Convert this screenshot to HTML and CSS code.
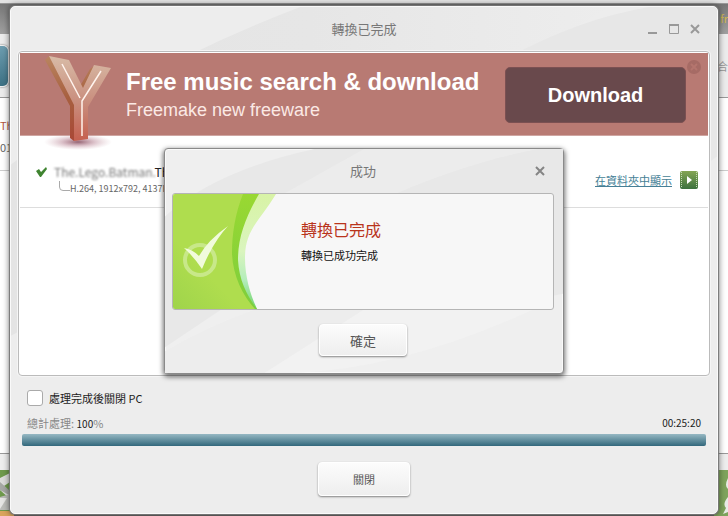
FILE: index.html
```html
<!DOCTYPE html>
<html lang="zh-Hant">

<head>
    <meta charset="UTF-8">
    <meta name="viewport" content="width=device-width, initial-scale=1.0">
    <title>轉換已完成</title>
    <link rel="stylesheet" href="styles.css">
</head>

<body>
    <!-- main program behind the window -->
    <div class="app">
        <div class="app-edge"></div>
        <div class="app-menu"><span>fr</span></div>
        <div class="app-toolbar">
            <div class="app-tab"></div>
            <span>合</span>
        </div>
        <div class="app-file">
            <p class="app-file-name">Th</p>
            <p>01:</p>
        </div>
        <div class="app-list"></div>
        <div class="app-status"></div>
        <div class="app-icons">
            <svg width="14" height="46" viewBox="0 0 14 46">
                <rect width="14" height="46" fill="#6f9a4c"/>
                <path d="M0 8 L10 3 V12 L4 16 L10 22 V29 L0 20Z" fill="#dcdcda"/>
                <path d="M0 12 L9 20 V25 L0 20Z" fill="#a6a8a4"/>
                <path d="M0 27 L10 24 V40 H0Z" fill="#bcbdb9"/>
                <path d="M0 28 H7 L0 39Z" fill="#e6e6e4"/>
                <path d="M0 41 H14 V46 H0Z" fill="#d9a45c"/>
            </svg>
            <svg width="14" height="46" viewBox="0 0 14 46">
                <rect width="14" height="46" fill="#7fa45c"/>
                <path d="M14 8 Q10 16 14 19Z M14 27 Q8 34 12 38 L9 44 L14 42Z" fill="#e9ece6"/>
            </svg>
        </div>
    </div>

    <main class="window">
        <svg class="sheen" viewBox="0 0 708 508" preserveAspectRatio="none">
            <defs>
                <linearGradient id="fade" x1="0" y1="0" x2="1" y2="0">
                    <stop offset="0" stop-color="#e4e4e4"/>
                    <stop offset=".5" stop-color="#e6e6e6"/>
                    <stop offset="1" stop-color="#ededed"/>
                </linearGradient>
            </defs>
            <path d="M0 158 Q120 65 290 0 H600 L500 60 L0 330Z" fill="url(#fade)"/>
            <path d="M500 50 Q570 12 640 0 H708 V150 L500 300Z" fill="#e7e7e7"/>
        </svg>
        <header class="title-bar">
            <h1>轉換已完成</h1>
            <div class="window-buttons">
                <button aria-label="最小化"><svg width="10" height="12" viewBox="0 0 10 12"><path d="M0 10H9" stroke="#999" stroke-width="2"/></svg></button>
                <button aria-label="最大化"><svg width="10" height="12" viewBox="0 0 10 12"><path d="M.5 2V10.500H9.500V2" fill="none" stroke="#999"/><path d="M0 2H10" stroke="#999" stroke-width="2"/></svg></button>
                <button aria-label="關閉視窗"><svg width="10" height="12" viewBox="0 0 10 12"><path d="M1 2L9 10M9 2L1 10" stroke="#999" stroke-width="2"/></svg></button>
            </div>
        </header>

        <section class="panel">
            <div class="banner">
                <svg class="banner-logo" width="76" height="98" viewBox="0 0 76 98">
                    <defs>
                        <linearGradient id="face" x1="0" y1="0" x2="0" y2="1">
                            <stop offset="0" stop-color="#d8bba6"/>
                            <stop offset=".55" stop-color="#c98d7d"/>
                            <stop offset="1" stop-color="#c5604f"/>
                        </linearGradient>
                        <linearGradient id="side" x1="0" y1="0" x2="0" y2="1">
                            <stop offset="0" stop-color="#b98560"/>
                            <stop offset=".5" stop-color="#a75f3f"/>
                            <stop offset="1" stop-color="#a94836"/>
                        </linearGradient>
                        <radialGradient id="glow">
                            <stop offset="0" stop-color="#713044" stop-opacity=".75"/>
                            <stop offset=".5" stop-color="#a05a70" stop-opacity=".35"/>
                            <stop offset="1" stop-color="#c08c98" stop-opacity="0"/>
                        </radialGradient>
                    </defs>
                    <ellipse cx="38" cy="89" rx="34" ry="8" fill="url(#glow)"/>
                    <path d="M5 7L9 3L33 45L50 16L54 13L44 52L34 88L30 85V53Z" fill="url(#side)"/>
                    <path d="M9 3L29 7L43 35L54 12L71 15L48 54V86L34 88V52Z" fill="url(#face)"/>
                    <path d="M22 11L40 45M61 18L42 48V83" fill="none" stroke="#fff3ed" stroke-width="1.500"/>
                </svg>
                <div class="banner-text">
                    <h2>Free music search &amp; download</h2>
                    <p>Freemake new freeware</p>
                </div>
                <button class="download">Download</button>
                <button class="banner-close" aria-label="關閉廣告"><svg width="14" height="14" viewBox="0 0 14 14"><circle cx="7" cy="7" r="7" fill="#a66b65"/><path d="M4 4L10 10M10 4L4 10" stroke="#b4756e" stroke-width="2"/></svg></button>
            </div>

            <div class="file-row">
                <svg class="file-check" width="12" height="10" viewBox="0 0 12 10"><path d="M0 4L3 2L5 5L10 0L11 2L5 10H4Z" fill="#3f8430"/></svg>
                <div class="file-info">
                    <p class="file-name"><span>The.Lego.Batman.</span>The</p>
                    <p class="file-meta"><svg width="12" height="12" viewBox="0 0 12 12"><path d="M1.500 0V6Q1.500 9.500 5 9.500H12" fill="none" stroke="#aaa"/></svg>H.264, 1912x792, 4137Kbps</p>
                </div>
                <a href="#">在資料夾中顯示</a>
                <button class="play" aria-label="播放"><svg width="18" height="18" viewBox="0 0 18 18"><path d="M1.500 1V17M16.500 1V17" stroke="#c5d9b5" stroke-dasharray="1 1"/><path d="M7 5L12 9L7 13Z" fill="#fff"/></svg></button>
            </div>
        </section>

        <footer class="bottom">
            <label class="shutdown"><input type="checkbox">處理完成後關閉 PC</label>
            <div class="total">
                <label for="progress">總計處理: <b>100</b>%</label>
                <time>00:25:20</time>
            </div>
            <progress id="progress" value="100" max="100"></progress>
            <button class="btn btn-close">關閉</button>
        </footer>
    </main>

    <div class="dialog" role="dialog" aria-labelledby="dialog-title">
        <svg class="sheen" viewBox="0 0 400 226" preserveAspectRatio="none">
            <path d="M0 68 Q50 22 150 0 H386 Q310 20 232 44 L0 200Z" fill="#e8e8e8"/>
            <path d="M200 0H376Q310 12 232 45H120Z" fill="#ececec"/>
            <path d="M232 45 Q310 12 376 0 H400 V146 L232 180Z" fill="#e8e8e8"/>
            <path d="M0 204Q40 180 90 162H370Q240 222 130 226H0Z" fill="#f2f2f2"/>
            <path d="M0 204Q40 180 90 162H200L100 226H0Z" fill="#ededed"/>
        </svg>
        <header class="dialog-bar">
            <h2 id="dialog-title">成功</h2>
            <button aria-label="關閉訊息"><svg width="10" height="10" viewBox="0 0 10 10"><path d="M1 1L9 9M9 1L1 9" stroke="#858585" stroke-width="2"/></svg></button>
        </header>
        <div class="message">
            <svg width="104" height="115" viewBox="0 0 104 115">
                <defs>
                    <linearGradient id="lime" x1="0" y1="1" x2=".3" y2=".6">
                        <stop offset="0" stop-color="#9fd44b"/>
                        <stop offset="1" stop-color="#afdd4e"/>
                    </linearGradient>
                    <linearGradient id="pale" x1="0" y1="0" x2="0" y2="1">
                        <stop offset="0" stop-color="#d8f3a6"/>
                        <stop offset=".5" stop-color="#daf5be"/>
                        <stop offset=".75" stop-color="#b3edbb"/>
                        <stop offset="1" stop-color="#72d36c"/>
                    </linearGradient>
                    <linearGradient id="mid" x1="0" y1="0" x2="0" y2="1">
                        <stop offset="0" stop-color="#99d832"/>
                        <stop offset="1" stop-color="#7dce3c"/>
                    </linearGradient>
                </defs>
                <path d="M20 0H103C86 28 72 36 72 64C72 84 78 102 84 115H20Z" fill="url(#pale)"/>
                <path d="M20 0H86C72 24 65 44 65 66C66 86 74 102 84 115H20Z" fill="url(#mid)"/>
                <path d="M0 0H70C62 20 59 40 59 60C60 82 70 102 82 115H0Z" fill="url(#lime)"/>
                <circle cx="27" cy="66" r="15" fill="none" stroke="#c8e889" stroke-width="4"/>
                <path d="M11 54Q19 55 26 62Q35 46 55 32Q40 48 29 75Q21 63 11 54Z" fill="#f1fbdc"/>
            </svg>
            <div class="message-text">
                <h3>轉換已完成</h3>
                <p>轉換已成功完成</p>
            </div>
        </div>
        <button class="btn btn-ok">確定</button>
    </div>
</body>

</html>
```
FILE: styles.css
```css
* {
    box-sizing: border-box;
}

body {
    position: relative;
    margin: 0;
    height: 100vh;
    overflow: hidden;
    font-family: "Noto Sans CJK TC", "Noto Sans", sans-serif;
    font-size: 11px;
    line-height: 16px;
    color: #222;
}

h1, h2, h3, p {
    margin: 0;
    font-weight: normal;
}

button {
    padding: 0;
    border: none;
    background: none;
    font-family: inherit;
    cursor: pointer;
}

svg {
    display: block;
    flex: none;
}

/* program behind */
.app {
    display: flex;
    flex-direction: column;
    height: 100%;
    background: #fff;
}

.app-edge {
    height: 4px;
    background: #e4e4e4;
    border-bottom: 1px solid #999;
}

.app-menu {
    height: 30px;
    background: linear-gradient(#777, #a0a0a0);
    text-align: right;
    font-size: 11px;
    line-height: 28px;
    color: #d0b850;
}

.app-toolbar {
    display: flex;
    justify-content: space-between;
    align-items: center;
    height: 64px;
    background: #ececec;
    border-bottom: 1px solid #999;
    color: #999;
}

.app-tab {
    width: 9px;
    height: 42px;
    border: 1px solid #eee;
    border-left: none;
    border-radius: 0 6px 6px 0;
    background: linear-gradient(#6d9db0, #3d7184);
    box-shadow: 0 0 2px #555;
}

.app-file {
    height: 73px;
    padding-top: 16px;
    border-bottom: 1px solid #ccc;
    color: #666;
}

.app-file p {
    line-height: 22px;
}

.app-file .app-file-name {
    color: #b1563e;
}

.app-list {
    flex: 1;
}

.app-status {
    height: 17px;
    background: #eee;
    border-top: 1px solid #999;
}

.app-icons {
    display: flex;
    justify-content: space-between;
    height: 46px;
    background: #6a6664;
}

.sheen {
    position: absolute;
    inset: 0;
    width: 100%;
    height: 100%;
    z-index: -1;
}

/* converter window */
.window {
    position: absolute;
    inset: 6px 10px 2px;
    z-index: 1;
    display: flex;
    flex-direction: column;
    padding: 0 7px;
    border: 1px solid #fafafa;
    border-radius: 5px;
    background: #ededed;
    box-shadow: 0 0 1px 1px #777, 0 0 6px 1px rgba(0, 0, 0, 0.5);
    overflow: hidden;
}

.title-bar {
    position: relative;
    height: 44px;
    display: flex;
    align-items: center;
    justify-content: center;
}

.title-bar h1,
.dialog-bar h2 {
    font-size: 13px;
    line-height: 20px;
    color: #777;
}

.window-buttons {
    position: absolute;
    right: 10px;
    display: flex;
    gap: 11px;
}

.panel {
    flex: 1;
    padding: 1px;
    border: 1px solid #bbb;
    border-radius: 4px;
    background: #fff;
    box-shadow: 0 0 0 1px #f5f5f5;
}

.banner {
    position: relative;
    display: flex;
    align-items: center;
    height: 83px;
    padding: 2px 22px 0 106px;
    background: #b87a73;
    border-bottom: 1px solid #cfa6a2;
    font-family: "Liberation Sans", Arial, sans-serif;
    color: #fff;
}

.banner-logo {
    position: absolute;
    left: 20px;
    top: 0;
}

.banner-text {
    flex: 1;
    white-space: nowrap;
}

.banner h2 {
    font-size: 24px;
    line-height: 30px;
    font-weight: bold;
}

.banner p {
    font-size: 18px;
    line-height: 26px;
    color: #fbe9e5;
}

.download {
    width: 181px;
    height: 56px;
    border: 1px solid #7b5052;
    border-radius: 5px;
    background: #69494c;
    color: #fff;
    font-size: 20px;
    font-weight: bold;
}

.banner-close {
    position: absolute;
    right: 7px;
    top: 7px;
}

.file-row {
    display: flex;
    align-items: center;
    height: 72px;
    padding: 16px 10px 0 16px;
    border-bottom: 1px solid #ddd;
}

.file-check {
    margin: 0 6px 16px 0;
}

.file-info {
    flex: 1;
    white-space: nowrap;
}

.file-name {
    font-size: 12px;
    line-height: 18px;
}

.file-name span {
    color: #777;
    filter: blur(1px);
}

.file-meta {
    display: flex;
    padding-left: 4px;
    font-size: 9px;
    color: #666;
}

.file-row a {
    margin-right: 8px;
    color: #467f96;
    text-decoration: underline;
}

.play {
    border-radius: 2px;
    background: linear-gradient(#84a554, #3c713e);
}

.bottom {
    display: flex;
    flex-direction: column;
    padding: 12px 4px 17px;
}

.shutdown {
    display: flex;
    align-items: center;
    gap: 6px;
    height: 20px;
    padding-left: 5px;
}

.shutdown input {
    appearance: none;
    width: 16px;
    height: 16px;
    margin: 0;
    border: 1px solid #aaa;
    border-radius: 3px;
    background: #fff;
}

.total {
    display: flex;
    justify-content: space-between;
    padding: 7px 5px 2px;
    color: #888;
}

.total b,
.total time {
    font-size: 10px;
    font-weight: normal;
    color: #222;
}

progress {
    appearance: none;
    display: block;
    width: 100%;
    height: 12px;
    border: none;
    border-radius: 2px;
    overflow: hidden;
}

progress::-webkit-progress-bar {
    background: #ddd;
}

progress::-webkit-progress-value {
    background: linear-gradient(#96b8c3, #32687c);
}

.btn {
    align-self: center;
    border: 1px solid #fff;
    border-radius: 4px;
    background: linear-gradient(#fcfcfc, #eee);
    box-shadow: 0 1px 2px rgba(0, 0, 0, 0.45);
    color: #555;
}

.btn-close {
    width: 92px;
    height: 34px;
    margin-top: 16px;
    font-size: 11px;
}

/* message box */
.dialog {
    position: absolute;
    top: 148px;
    left: 50%;
    z-index: 2;
    transform: translateX(-50%);
    display: flex;
    flex-direction: column;
    width: 400px;
    padding: 0 9px 17px 7px;
    border: 1px solid #8a8a8a;
    border-radius: 4px;
    background: #efefef;
    box-shadow: inset 0 0 0 1px #fafafa, 0 2px 5px 1px rgba(0, 0, 0, 0.55);
}

.dialog-bar {
    position: relative;
    display: flex;
    align-items: center;
    justify-content: center;
    height: 44px;
}

.dialog-bar button {
    position: absolute;
    right: 9px;
}

.message {
    display: flex;
    border: 1px solid #b5b5b5;
    border-radius: 3px;
    background: #f7f7f7;
    overflow: hidden;
}

.message-text {
    padding: 22px 0 0 24px;
}

.message h3 {
    font-size: 16px;
    line-height: 26px;
    color: #b9341c;
}

.message p {
    line-height: 26px;
    color: #111;
}

.btn-ok {
    width: 88px;
    height: 32px;
    margin-top: 14px;
    font-size: 13px;
}
```
